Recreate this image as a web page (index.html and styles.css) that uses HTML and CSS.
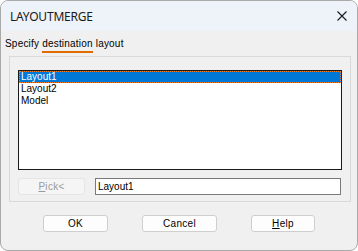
FILE: index.html
```html
<!DOCTYPE html>
<html>
<head>
<meta charset="utf-8">
<link rel="stylesheet" href="styles.css">
</head>
<body>
<div class="window">
  <div class="titlebar">
    <span class="title">LAYOUTMERGE</span>
    <svg class="close" width="10" height="10" viewBox="0 0 10 10"><path d="M0.5 0.5 L9.5 9.5 M9.5 0.5 L0.5 9.5" stroke="#1a1a1a" stroke-width="1.1" fill="none"/></svg>
  </div>
  <div class="content">
    <div class="label">Specify <span class="u">destination</span> layout</div>
    <div class="group">
      <div class="list">
        <div class="item sel">Layout1</div>
        <div class="item">Layout2</div>
        <div class="item">Model</div>
      </div>
      <div class="pickrow">
        <div class="btn pick"><span class="ul">P</span>ick&lt;</div>
        <div class="input">Layout1</div>
      </div>
    </div>
    <div class="buttons">
      <div class="btn ok">OK</div>
      <div class="btn cancel">Cancel</div>
      <div class="btn help"><span class="ul">H</span>elp</div>
    </div>
  </div>
</div>
</body>
</html>
```
FILE: styles.css
```css
html, body { margin: 0; padding: 0; background: #ffffff; }
.window {
  box-sizing: border-box;
  width: 358px; height: 251px;
  border: 1px solid #a9a9a9;
  border-radius: 8px;
  overflow: hidden;
  background: #f0f0f0;
  font-family: "Liberation Sans", Arial, sans-serif;
  font-size: 10px;
  color: #000;
}
.titlebar {
  height: 30px;
  background: #eef2f9;
  display: flex;
  align-items: center;
  justify-content: space-between;
  padding: 0 10px 0 9px;
}
.title { font-family: "Noto Sans", sans-serif; font-size: 12px; color: #1a1a1a; letter-spacing: -0.2px; }
.close { margin-top: -1px; }
.label {
  height: 25px;
  padding-left: 4px;
  padding-top: 7px;
  box-sizing: border-box;
  letter-spacing: 0.2px;
}
.label .u { border-bottom: 2px solid #e06c00; padding-bottom: 2px; }
.group {
  box-sizing: border-box;
  margin-left: 8px;
  width: 342px;
  height: 146px;
  border: 1px solid #d9d9d9;
  padding: 13px 0 0 8px;
}
.list {
  box-sizing: border-box;
  width: 324px; height: 100px;
  border: 1px solid #1a1a1a;
  background: #fff;
  padding: 0;
}
.item { height: 12px; line-height: 12px; padding-left: 2px; }
.item.sel {
  background: #0078d7; color: #fff;
  outline: 1px dotted #f08020; outline-offset: -1px;
}
.pickrow { display: flex; margin-top: 8px; gap: 10px; }
.btn {
  box-sizing: border-box;
  height: 17px;
  border: 1px solid #cfcfcf;
  border-radius: 3px;
  background: #fdfdfd;
  display: flex; align-items: center; justify-content: center;
  letter-spacing: 0.3px;
}
.pick { width: 67px; height: 17px; background: #f5f5f5; border-color: #e5e5e5; color: #9a9a9a; }
.ul { text-decoration: underline; }
.input {
  box-sizing: border-box;
  width: 246px; height: 17px;
  border: 1px solid #7a7a7a;
  background: #fff;
  padding-left: 2px;
  line-height: 15px;
}
.buttons { display: flex; margin-top: 13px; padding-left: 42px; }
.ok { width: 65px; }
.cancel { width: 75px; margin-left: 34px; }
.help { width: 64px; margin-left: 34px; }
```
